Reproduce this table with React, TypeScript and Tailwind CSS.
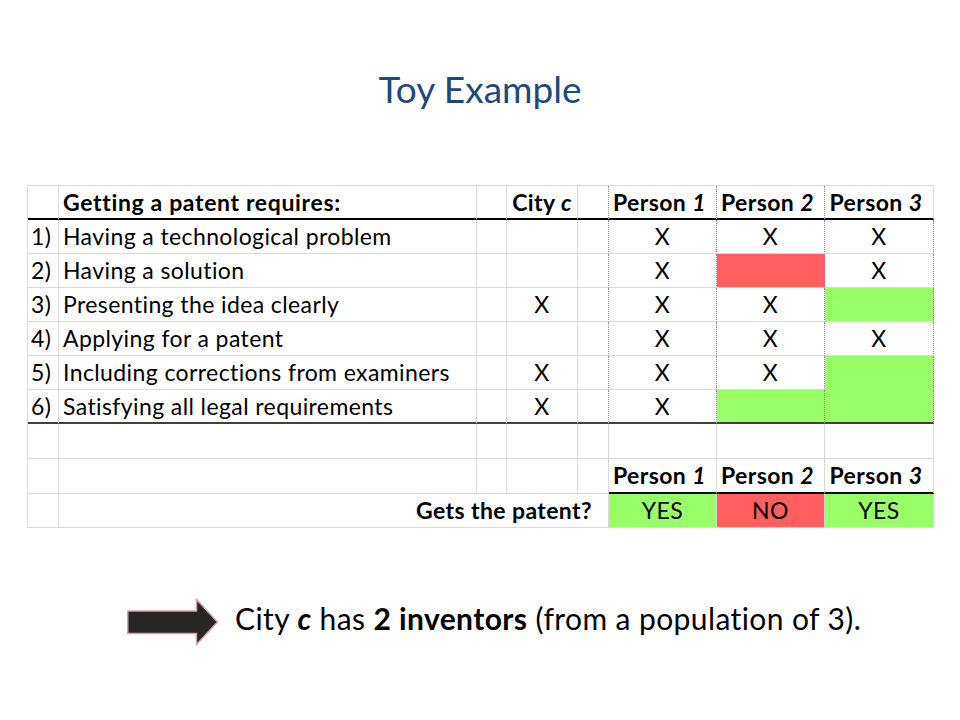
import type { ReactNode } from 'react'

const grid = 'border-r border-b border-[#d9d9d9]'
const dotted = 'border-r border-b border-[#d9d9d9] border-r-[#8c8c8c] [border-right-style:dotted]'
const green = 'bg-[#99ff66]'
const red = 'bg-[#ff5f5f]'

function Cell({ children, className = '' }: { children?: ReactNode; className?: string }) {
  return <div className={`flex items-center overflow-hidden whitespace-nowrap ${className}`}>{children}</div>
}

const rows: { n: string; text: string; city: boolean; p: (string | null)[] }[] = [
  { n: '1)', text: 'Having a technological problem', city: false, p: ['X', 'X', 'X'] },
  { n: '2)', text: 'Having a solution', city: false, p: ['X', 'red', 'X'] },
  { n: '3)', text: 'Presenting the idea clearly', city: true, p: ['X', 'X', 'green'] },
  { n: '4)', text: 'Applying for a patent', city: false, p: ['X', 'X', 'X'] },
  { n: '5)', text: 'Including corrections from examiners', city: true, p: ['X', 'X', 'green'] },
  { n: '6)', text: 'Satisfying all legal requirements', city: true, p: ['X', 'green', 'green'] },
]

function PersonHead({ n }: { n: number }) {
  return (
    <span className="font-bold">
      Person <i>{n}</i>
    </span>
  )
}

export default function App() {
  return (
    <div className="h-[720px] w-[960px] bg-white font-['Lato','Open_Sans',sans-serif] text-black">
      <h1 className="pt-[65px] text-center text-[37px] leading-[48px] text-[#1f497d]">Toy Example</h1>

      <div className="ml-[27px] mt-[72px] grid w-fit grid-cols-[31px_418px_30px_71px_31px_108px_108px_109px] grid-rows-[34px_34px_34px_34px_34px_34px_34px_35px_35px_34px] border-l border-t border-[#d9d9d9] text-[23px] tracking-[0.4px]">
        {/* header */}
        <Cell className={`${grid} border-b-2 border-b-black`} />
        <Cell className={`${grid} border-b-2 border-b-black pl-[4px] font-bold tracking-[0.65px]`}>
          Getting a patent requires:
        </Cell>
        <Cell className={`${grid} border-b-2 border-b-black`} />
        <Cell className={`${grid} border-b-2 border-b-black justify-center font-bold`}>
          City&nbsp;<i>c</i>
        </Cell>
        <Cell className={`${dotted} border-b-2 border-b-black`} />
        {[1, 2, 3].map((n) => (
          <Cell key={n} className={`${n === 3 ? grid : dotted} border-b-2 border-b-black justify-center pr-[6px]`}>
            <PersonHead n={n} />
          </Cell>
        ))}

        {/* requirement rows */}
        {rows.map((r, i) => {
          const last = i === rows.length - 1
          const bottom = last ? 'border-b-2 border-b-[#404040]' : ''
          return [
            <Cell key={`a${i}`} className={`${grid} ${bottom} pl-[3px]`}>
              {r.n}
            </Cell>,
            <Cell key={`b${i}`} className={`${grid} ${bottom} pl-[4px]`}>
              {r.text}
            </Cell>,
            <Cell key={`c${i}`} className={`${grid} ${bottom}`} />,
            <Cell key={`d${i}`} className={`${grid} ${bottom} justify-center`}>
              {r.city ? 'X' : ''}
            </Cell>,
            <Cell key={`e${i}`} className={`${dotted} ${bottom}`} />,
            ...r.p.map((v, j) => {
              const fill = v === 'green' ? green : v === 'red' ? red : ''
              const nextFill = i < rows.length - 1 && rows[i + 1].p[j] === v && v === 'green'
              return (
                <Cell
                  key={`p${i}${j}`}
                  className={`${dotted} ${bottom} ${fill} ${nextFill ? 'border-b-[#99ff66]' : ''} justify-center`}
                >
                  {v === 'X' ? 'X' : ''}
                </Cell>
              )
            }),
          ]
        })}

        {/* blank row */}
        {Array.from({ length: 8 }).map((_, i) => (
          <Cell key={`blank${i}`} className={grid} />
        ))}

        {/* second header */}
        {Array.from({ length: 5 }).map((_, i) => (
          <Cell key={`h2${i}`} className={grid} />
        ))}
        {[1, 2, 3].map((n) => (
          <Cell key={`ph${n}`} className={`${grid} border-b-2 border-b-black justify-center pr-[6px]`}>
            <PersonHead n={n} />
          </Cell>
        ))}

        {/* result row */}
        <Cell className={grid} />
        <Cell className={`${grid} col-span-4 justify-end pr-[16px] font-bold`}>Gets the patent?</Cell>
        <Cell className={`${grid} ${green} justify-center`}>YES</Cell>
        <Cell className={`${grid} ${red} justify-center`}>NO</Cell>
        <Cell className={`${grid} ${green} justify-center`}>YES</Cell>
      </div>

      <div className="ml-[127px] mt-[70px] flex items-center gap-[16px]">
        <svg width="92" height="48" viewBox="0 0 92 48">
          <polygon
            points="0.75,13 69.5,13 69.5,1.5 90.5,24 69.5,46.5 69.5,35.5 0.75,35.5"
            fill="#262626"
            stroke="#d8a0a0"
            strokeWidth="1.5"
          />
        </svg>
        <p className="-mt-[9px] text-[30px] leading-[36px] tracking-[0.4px]">
          City <b><i>c</i></b> has <b>2 inventors</b> (from a population of 3).
        </p>
      </div>
    </div>
  )
}
